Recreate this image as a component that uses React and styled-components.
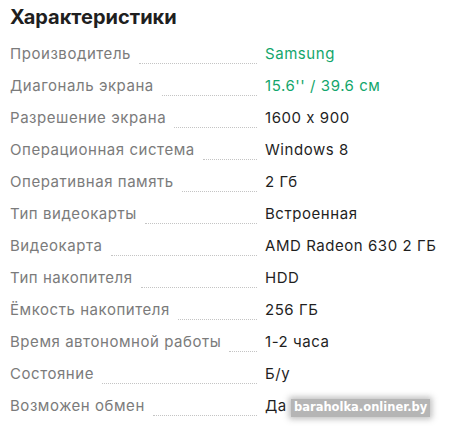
import React from "react";
import styled, { createGlobalStyle } from "styled-components";

const GlobalStyle = createGlobalStyle`
  body {
    margin: 0;
    background: #fff;
    font-family: Inter, "Liberation Sans", Arial, sans-serif;
    font-feature-settings: "calt" 0;
  }
`;

const Wrap = styled.div`
  position: relative;
  width: 449px;
  height: 428px;
  padding: 3px 10px 0;
  box-sizing: border-box;
  overflow: hidden;
`;

const Title = styled.h2`
  margin: 0 0 7px;
  font-size: 20px;
  line-height: 28px;
  font-weight: 700;
  color: #1f1f1f;
`;

const Row = styled.div`
  display: flex;
  align-items: center;
  height: 32px;
`;

const Label = styled.div`
  flex: 0 0 247px;
  display: flex;
  font-size: 15px;
  line-height: 20px;
  letter-spacing: 0.55px;
  color: #7b7b7b;
  white-space: nowrap;
`;

const Dots = styled.span`
  flex: 1;
  margin-left: 8px;
  border-bottom: 1px dotted #c4c4c4;
`;

const Value = styled.div`
  padding-left: 8px;
  font-size: 15px;
  line-height: 20px;
  letter-spacing: 0.55px;
  color: ${(p) => (p.$accent ? "#13a66c" : "#1f1f1f")};
`;

const Watermark = styled.div`
  position: absolute;
  left: 291px;
  top: 399px;
  padding: 1px 3px 2px;
  background: rgba(90, 90, 90, 0.45);
  box-shadow: 0 0 6px 2px rgba(90, 90, 90, 0.4);
  color: #fff;
  font-family: "DejaVu Sans", Verdana, sans-serif;
  font-weight: 700;
  font-size: 11.5px;
  line-height: 15px;
`;

const specs = [
  ["Производитель", "Samsung", true],
  ["Диагональ экрана", "15.6'' / 39.6 см", true],
  ["Разрешение экрана", "1600 x 900"],
  ["Операционная система", "Windows 8"],
  ["Оперативная память", "2 Гб"],
  ["Тип видеокарты", "Встроенная"],
  ["Видеокарта", "AMD Radeon 630 2 ГБ"],
  ["Тип накопителя", "HDD"],
  ["Ёмкость накопителя", "256 ГБ"],
  ["Время автономной работы", "1-2 часа"],
  ["Состояние", "Б/у"],
  ["Возможен обмен", "Да"],
];

export default function App() {
  return (
    <Wrap>
      <GlobalStyle />
      <Title>Характеристики</Title>
      {specs.map(([name, value, accent]) => (
        <Row key={name}>
          <Label>
            {name}
            <Dots />
          </Label>
          <Value $accent={accent}>{value}</Value>
        </Row>
      ))}
      <Watermark>baraholka.onliner.by</Watermark>
    </Wrap>
  );
}
